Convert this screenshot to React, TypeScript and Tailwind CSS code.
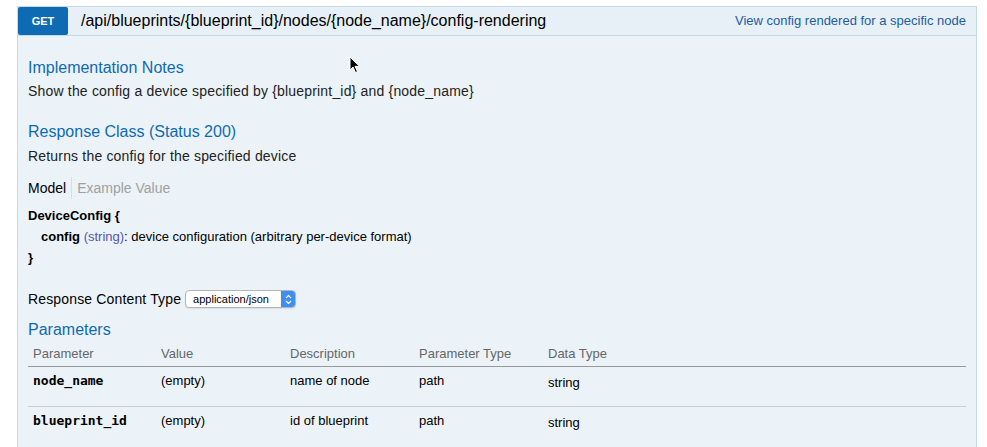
import React from 'react';

const sans = { fontFamily: '"Liberation Sans", Arial, sans-serif' };

const params = [
  { name: 'node_name', value: '(empty)', desc: 'name of node', type: 'path', data: 'string' },
  { name: 'blueprint_id', value: '(empty)', desc: 'id of blueprint', type: 'path', data: 'string' },
];

const Cursor = () => (
  <svg className="absolute left-[349px] top-[56px]" width="12" height="18" viewBox="0 0 12 18">
    <path d="M1 1 L1 14 L4 11 L6.5 16.5 L8.5 15.6 L6 10.3 L10.5 10.3 Z" fill="#000" stroke="#fff" strokeWidth="1" />
  </svg>
);

const ContentTypeSelect = () => (
  <div className="ml-[4px] flex h-[18px] w-[111px] items-stretch overflow-hidden rounded-[4px] border border-[#b5b5b5] bg-white shadow-[0_1px_1px_rgba(0,0,0,0.08)]">
    <span className="flex-1 pl-[7px] text-[11px] leading-[16px] text-black">application/json</span>
    <span className="flex w-[14px] items-center justify-center bg-[#3d8ff5]">
      <svg width="7" height="11" viewBox="0 0 7 11">
        <path d="M1 4 L3.5 1.5 L6 4 M1 7 L3.5 9.5 L6 7" fill="none" stroke="#fff" strokeWidth="1.2" />
      </svg>
    </span>
  </div>
);

export default function App() {
  return (
    <div className="relative min-h-[447px] bg-white pt-[6px] text-[#222]" style={sans}>
      <div className="ml-[17px] w-[960px] border border-[#c3d9ec]">
        <div className="flex h-[29px] items-start border-b border-[#c3d9ec] bg-[#e7f0f7]">
          <span className="flex h-[28px] w-[50px] items-center justify-center rounded-[2px] bg-[#0f6ab4] text-[11px] font-bold text-white">
            GET
          </span>
          <span className="ml-[13px] text-[16px] leading-[28px] text-black">
            /api/blueprints/{'{blueprint_id}'}/nodes/{'{node_name}'}/config-rendering
          </span>
          <span className="ml-auto mr-[10px] text-[13px] leading-[28px] text-[#1d5c9f]">
            View config rendered for a specific node
          </span>
        </div>

        <div className="bg-[#ebf3f9] px-[10px] pt-[22px]">
          <h4 className="text-[16px] leading-[20px] text-[#0f6ab4]">Implementation Notes</h4>
          <p className="mt-[4px] text-[14px] leading-[18px] tracking-[0.18px]">
            Show the config a device specified by {'{blueprint_id}'} and {'{node_name}'}
          </p>

          <h4 className="mt-[22px] text-[16px] leading-[20px] text-[#0f6ab4]">Response Class (Status 200)</h4>
          <p className="mt-[5px] text-[14px] leading-[18px] tracking-[0.18px]">Returns the config for the specified device</p>

          <div className="mt-[14px] flex h-[18px] items-center text-[14px]">
            <span className="pr-[5px] text-black">Model</span>
            <span className="h-[22px] w-px bg-[#d5dde5]" />
            <span className="pl-[5px] text-[#a0a0a0]">Example Value</span>
          </div>

          <div className="mt-[8px] text-[13px] leading-[21px] text-black">
            <div className="font-bold">DeviceConfig {'{'}</div>
            <div className="pl-[13px]">
              <span className="font-bold">config</span> <span className="text-[#5555aa]">(string)</span>: device
              configuration (arbitrary per-device format)
            </div>
            <div className="font-bold">{'}'}</div>
          </div>

          <div className="mt-[21px] flex h-[20px] items-center text-[14px] text-black">
            <span className="tracking-[0.15px]">Response Content Type</span>
            <ContentTypeSelect />
          </div>

          <h4 className="mt-[11px] text-[16px] leading-[20px] text-[#0f6ab4]">Parameters</h4>

          <table className="mt-[1px] w-full border-collapse text-[13px]">
            <thead>
              <tr className="border-b border-[#999]">
                {['Parameter', 'Value', 'Description', 'Parameter Type', 'Data Type'].map((h, i) => (
                  <th
                    key={h}
                    className={`pb-[3px] pl-[5px] pt-[4px] text-left font-normal leading-[18px] text-[#666] ${i === 0 ? 'w-[128px]' : i < 4 ? 'w-[129px]' : ''}`}
                  >
                    {h}
                  </th>
                ))}
              </tr>
            </thead>
            <tbody>
              {params.map((p, i) => (
                <tr key={p.name} className={i === 0 ? 'border-b border-[#ccc]' : ''}>
                  <td className="h-[40px] pl-[5px] pt-[5px] align-top font-bold leading-[18px] text-black" style={{ fontFamily: '"DejaVu Sans Mono", monospace' }}>
                    {p.name}
                  </td>
                  <td className="pl-[5px] pt-[5px] align-top leading-[18px] text-black">{p.value}</td>
                  <td className="pl-[5px] pt-[5px] align-top leading-[18px] text-black">{p.desc}</td>
                  <td className="pl-[5px] pt-[5px] align-top leading-[18px] text-black">{p.type}</td>
                  <td className="pl-[5px] pt-[7px] align-top leading-[18px] text-black">{p.data}</td>
                </tr>
              ))}
            </tbody>
          </table>
        </div>
      </div>
      <Cursor />
    </div>
  );
}
